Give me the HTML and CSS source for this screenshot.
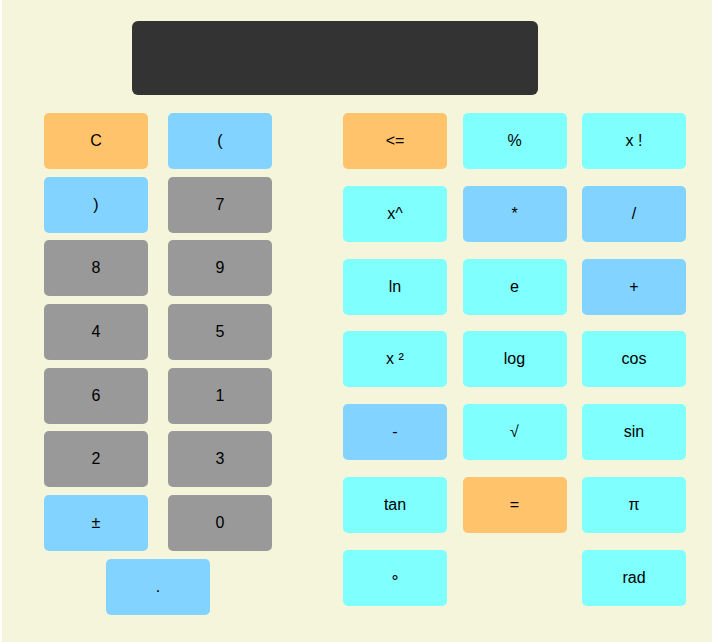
FILE: index.html
```html
<!DOCTYPE html>
<html lang="en">
<head>
    <meta charset="UTF-8">
    <meta name="viewport" content="width=device-width, initial-scale=1.0">
    <title>Calculator</title>
    <link rel="stylesheet" href="styles.css">
</head>
<body>

    <div class="calculator">
        <div class="screen" id="screen"></div>

        <div class="keys">
            <div class="basic-keys">
                <button class="key clear">C</button>
                <button class="key op">(</button>
                <button class="key op">)</button>
                <button class="key num">7</button>
                <button class="key num">8</button>
                <button class="key num">9</button>
                <button class="key num">4</button>
                <button class="key num">5</button>
                <button class="key num">6</button>
                <button class="key num">1</button>
                <button class="key num">2</button>
                <button class="key num">3</button>
                <button class="key op">±</button>
                <button class="key num">0</button>
                <button class="key op dot">.</button>
            </div>

            <div class="science-keys">
                <button class="key clear">&lt;=</button>
                <button class="key fn">%</button>
                <button class="key fn">x !</button>
                <button class="key fn">x^</button>
                <button class="key op">*</button>
                <button class="key op">/</button>
                <button class="key fn">ln</button>
                <button class="key fn">e</button>
                <button class="key op">+</button>
                <button class="key fn">x ²</button>
                <button class="key fn">log</button>
                <button class="key fn">cos</button>
                <button class="key op">-</button>
                <button class="key fn">√</button>
                <button class="key fn">sin</button>
                <button class="key fn">tan</button>
                <button class="key clear">=</button>
                <button class="key fn">π</button>
                <button class="key fn">∘</button>
                <span></span>
                <button class="key fn">rad</button>
            </div>
        </div>
    </div>

</body>
</html>
```

FILE: styles.css
```css
html {
    background: #ffffff;
}

body {
    margin: 0;
    padding: 0;
    font-family: 'Liberation Sans', Arial, sans-serif;
}

.calculator {
    margin-left: 2px;
    min-height: 642px;
    padding-top: 21px;
    box-sizing: border-box;
    background: #f5f5dc; /* beige page */
}

.screen {
    width: 406px;
    height: 74px;
    margin-left: 130px;
    background: #333333;
    border-radius: 6px;
}

.keys {
    display: flex;
    gap: 71px;
    margin-top: 18px;
    padding-left: 42px;
}

.basic-keys {
    display: grid;
    grid-template-columns: 104px 104px;
    grid-auto-rows: 56px;
    column-gap: 20px;
    row-gap: 7.7px;
}

.basic-keys .dot {
    grid-column: 1 / span 2;
    justify-self: center;
    width: 104px;
}

.science-keys {
    display: grid;
    grid-template-columns: repeat(3, 104px);
    grid-auto-rows: 56px;
    column-gap: 15.5px;
    row-gap: 16.8px;
}

.key {
    border: none;
    border-radius: 5px;
    font-family: inherit;
    font-size: 16px;
    color: #000000;
    cursor: pointer;
    padding: 0;
}

.clear {
    background-color: #ffc36b; /* orange */
}

.op {
    background-color: #82d3ff; /* light blue */
}

.num {
    background-color: #999999; /* gray */
}

.fn {
    background-color: #80ffff; /* cyan */
}
```
